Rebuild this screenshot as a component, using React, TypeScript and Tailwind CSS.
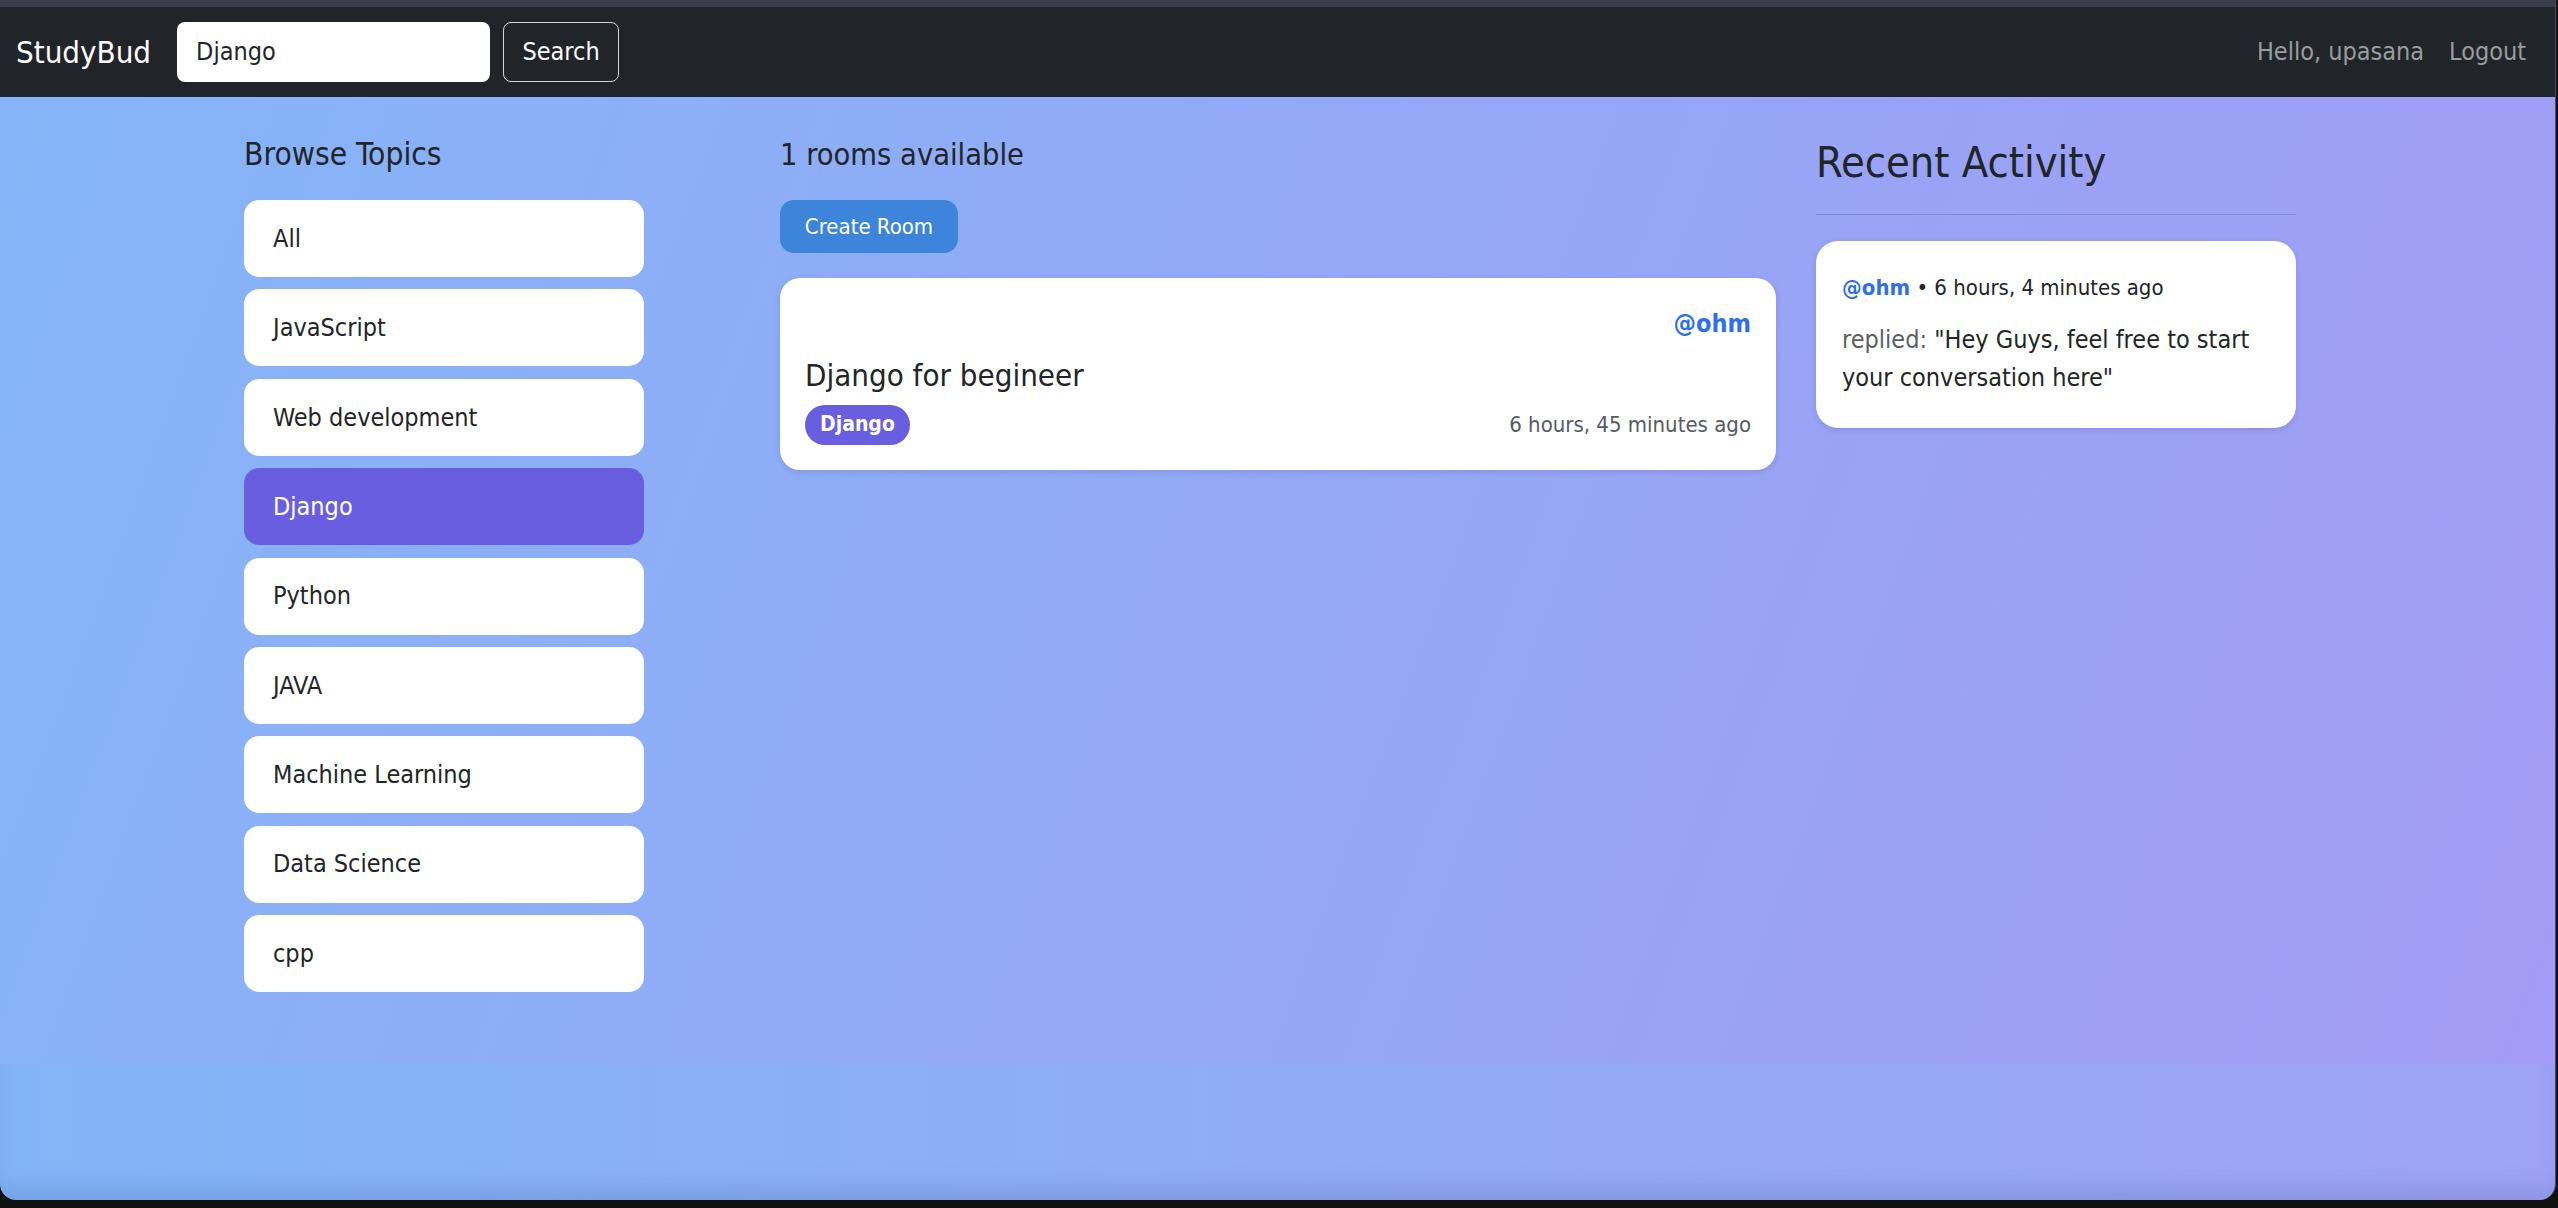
export default function App() {
  const topics = [
    "All",
    "JavaScript",
    "Web development",
    "Django",
    "Python",
    "JAVA",
    "Machine Learning",
    "Data Science",
    "cpp",
  ];
  return (
    <div className="w-[2558px] h-[1208px] bg-[#111111] overflow-hidden font-['DejaVu_Sans_Condensed','DejaVu_Sans',sans-serif] text-[#212529]">
      <div className="w-[2556px] h-[1200px] rounded-b-[16px] overflow-hidden flex flex-col border-r border-[#4a4d57]">
        <div className="h-[7px] bg-[#393d4b]" />
        <nav className="h-[90px] bg-[#212529] flex items-center pl-[16px] pr-[29px]">
          <span className="text-[31px] text-white mr-[26px] leading-none">StudyBud</span>
          <div className="w-[313px] h-[60px] bg-white rounded-[8px] flex items-center pl-[19px] text-[25px]">
            Django
          </div>
          <button className="ml-[13px] w-[116px] h-[60px] border border-[#d6d6d6] rounded-[8px] text-white text-[25px]">
            Search
          </button>
          <div className="ml-auto flex gap-[25px] text-[25px] text-[#9a9c9f]">
            <span>Hello, upasana</span>
            <span>Logout</span>
          </div>
        </nav>
        <main className="h-[967px] bg-[linear-gradient(110deg,#85b5f8,#a39bf5)] flex items-start pl-[244px] pt-[39px]">
          <section className="w-[400px]">
            <h3 className="text-[31.5px] leading-[37px] mb-[27px]">Browse Topics</h3>
            <div className="flex flex-col gap-[12.375px]">
              {topics.map((t) => (
                <div
                  key={t}
                  className={
                    t === "Django"
                      ? "h-[77px] rounded-[15px] bg-[#6a5ee0] text-white flex items-center pl-[29px] text-[25px]"
                      : "h-[77px] rounded-[15px] bg-white flex items-center pl-[29px] text-[25px]"
                  }
                >
                  {t}
                </div>
              ))}
            </div>
          </section>
          <section className="w-[996px] ml-[136px]">
            <h5 className="text-[30.5px] leading-[37px] mb-[27px]">1 rooms available</h5>
            <button className="h-[53px] w-[178px] rounded-[14px] bg-[#3d84db] text-white text-[22px]">
              Create Room
            </button>
            <div className="mt-[25px] bg-white rounded-[20px] shadow-[0_2px_6px_rgba(60,70,140,0.2)] pt-[27px] pb-[25px] px-[25px]">
              <div className="flex justify-end text-[25px] leading-[37.5px] font-bold text-[#2f6fea]">@ohm</div>
              <div className="mt-[14px] text-[31px] leading-[37px]">Django for begineer</div>
              <div className="mt-[11px] flex items-center justify-between">
                <span className="h-[40px] px-[15px] rounded-full bg-[#6a5ee0] text-white font-bold text-[21px] flex items-center">
                  Django
                </span>
                <span className="text-[22px] text-[#555b62]">6 hours, 45 minutes ago</span>
              </div>
            </div>
          </section>
          <section className="w-[480px] ml-[40px]">
            <h2 className="text-[43px] leading-[52px] pb-[26px] border-b border-[#7d8cdc]">Recent Activity</h2>
            <div className="mt-[26px] bg-white rounded-[22px] shadow-[0_2px_6px_rgba(60,70,140,0.2)] pt-[32px] pb-[32px] pl-[26px] pr-[20px]">
              <div className="text-[22px] leading-[30px]">
                <span className="font-bold text-[#2f6fea]">@ohm</span> • 6 hours, 4 minutes ago
              </div>
              <div className="mt-[18px] text-[25px] leading-[37.5px]">
                <span className="text-[#5a5f66]">replied:</span> "Hey Guys, feel free to start your conversation here"
              </div>
            </div>
          </section>
        </main>
        <div className="flex-1 bg-[linear-gradient(90deg,#82b5f7,#9fa3f6)] shadow-[inset_0_-18px_26px_-10px_rgba(50,70,140,0.22)]" />
      </div>
    </div>
  );
}
